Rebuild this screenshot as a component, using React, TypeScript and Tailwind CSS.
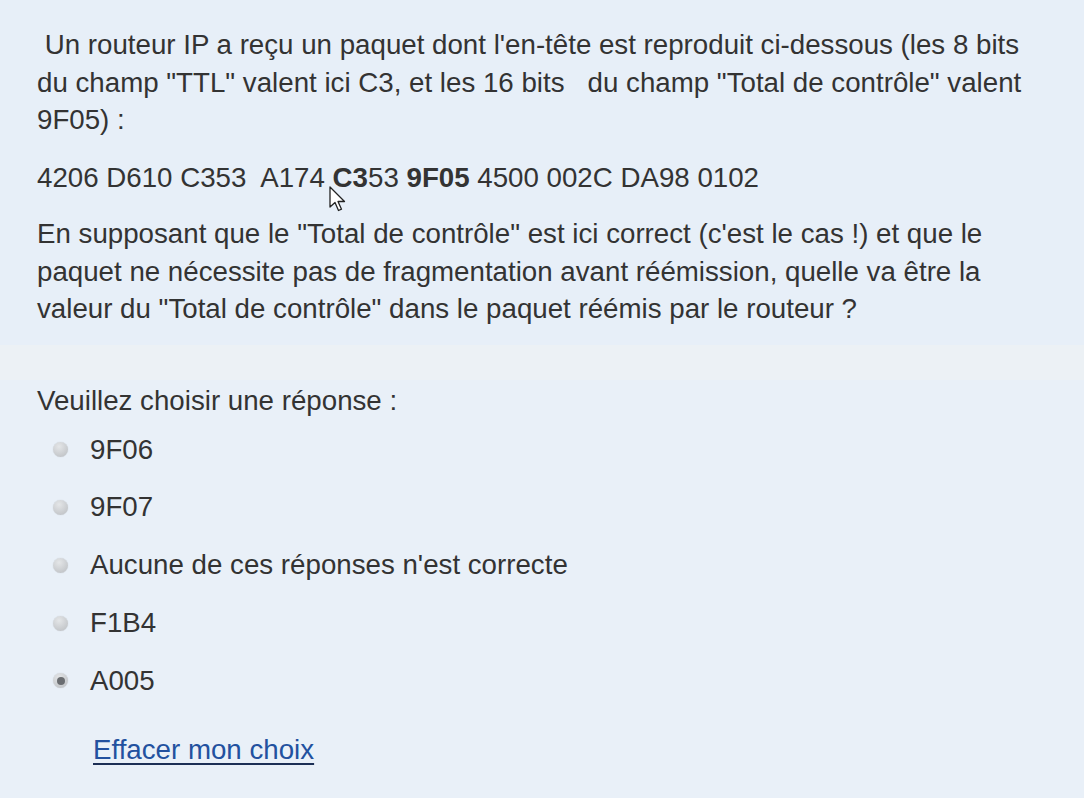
import React from 'react';

const options = [
  { id: 'a', label: '9F06', checked: false },
  { id: 'b', label: '9F07', checked: false },
  { id: 'c', label: "Aucune de ces réponses n'est correcte", checked: false },
  { id: 'd', label: 'F1B4', checked: false },
  { id: 'e', label: 'A005', checked: true },
];

function Radio({ checked }: { checked: boolean }) {
  return (
    <span className="relative flex items-center justify-center w-[15px] h-[15px] rounded-full bg-[radial-gradient(circle_at_40%_30%,#e4e6e8,#b9bcc0)] shadow-[0_0_1px_rgba(0,0,0,0.2)]">
      {checked && <span className="w-[8px] h-[8px] rounded-full bg-[#6a6d71]" />}
    </span>
  );
}

function Cursor() {
  return (
    <svg className="absolute left-[329px] top-[186px]" width="20" height="28" viewBox="0 0 20 28">
      <path
        d="M1 1 L1 21 L6 16.5 L9.5 24.5 L12.5 23.2 L9 15.5 L15.5 15.5 Z"
        fill="#fff"
        stroke="#222"
        strokeWidth="1.3"
        strokeLinejoin="round"
      />
    </svg>
  );
}

export default function App() {
  return (
    <div className="w-full h-[802px] bg-white font-['Liberation_Sans',Arial,sans-serif] text-[27.7px] text-[#333]">
      <div className="relative w-[1084px] h-[798px] bg-[#e9f0f8] flex flex-col">
        <div className="bg-[#e7eff8] pl-[37px] pr-[40px] pt-[26px] h-[345px] leading-[37.5px]">
          <p className="mb-[20.5px]">
            &nbsp;Un routeur IP a reçu un paquet dont l'en-tête est reproduit ci-dessous (les 8 bits du champ "TTL" valent ici C3, et les 16 bits&nbsp;&nbsp; du champ "Total de contrôle" valent 9F05) :
          </p>
          <p className="mb-[18.5px]">
            4206 D610 C353&nbsp; A174 <b>C3</b>53 <b>9F05</b> 4500 002C DA98 0102
          </p>
          <p>
            En supposant que le "Total de contrôle" est ici correct (c'est le cas !) et que le paquet ne nécessite pas de fragmentation avant réémission, quelle va être la valeur du "Total de contrôle" dans le paquet réémis par le routeur ?
          </p>
        </div>

        <div className="bg-[#ecf1f5] h-[34.5px]" />

        <div className="pl-[37px] flex-1 leading-[42.5px]">
          <p>Veuillez choisir une réponse :</p>
          <div className="mt-[6.5px] flex flex-col gap-[15.25px]">
            {options.map((o) => (
              <label key={o.id} className="flex items-center pl-[16px]">
                <Radio checked={o.checked} />
                <span className="ml-[22px]">{o.label}</span>
              </label>
            ))}
          </div>
          <div className="mt-[26.5px] pl-[56px]">
            <a href="#" className="text-[#22519f] underline decoration-[#1c2f55] underline-offset-[4px]">
              Effacer mon choix
            </a>
          </div>
        </div>

        <Cursor />
      </div>
    </div>
  );
}
